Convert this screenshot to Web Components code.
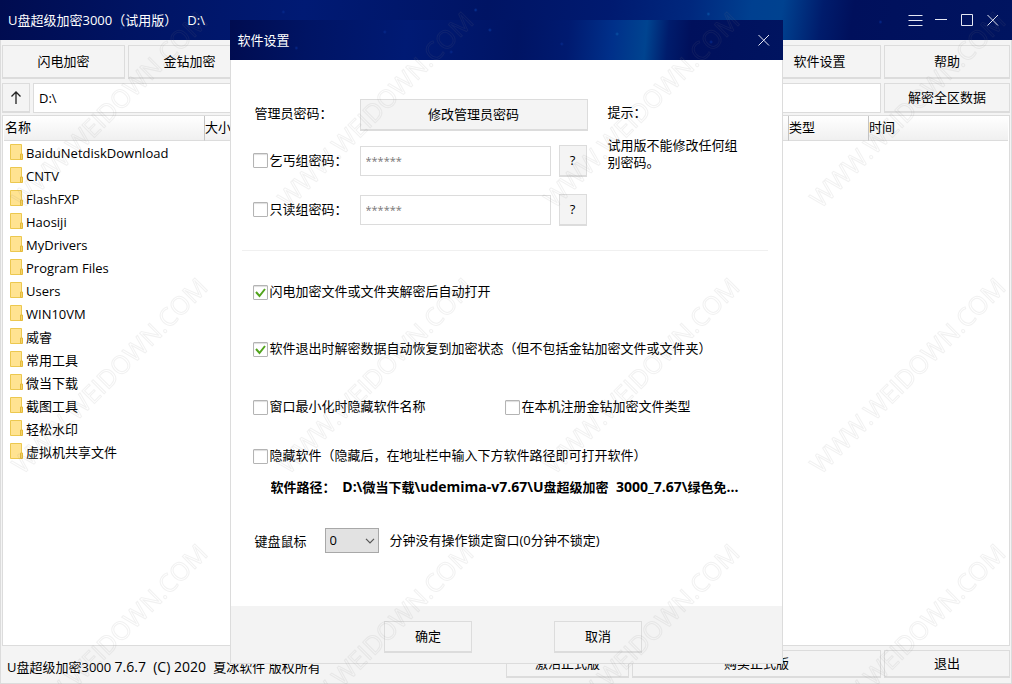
<!DOCTYPE html>
<html lang="zh-CN">
<head>
<meta charset="utf-8">
<meta name="viewport" content="width=device-width, initial-scale=1">
<title>U盘超级加密3000</title>
<style>
  :root {
    --line: #dcdcdc;
    --panel: #f4f4f4;
    --stars:
      radial-gradient(circle at 12% 70%, #06298c 0, transparent 2px),
      radial-gradient(circle at 28% 30%, #06298c 0, transparent 2px),
      radial-gradient(circle at 40% 80%, #06298c 0, transparent 2px),
      radial-gradient(circle at 47% 25%, #083496 0, transparent 2px),
      radial-gradient(circle at 60% 60%, #06298c 0, transparent 2px),
      radial-gradient(circle at 70% 35%, #0a52a4 0, transparent 2px),
      radial-gradient(circle at 87% 55%, #06298c 0, transparent 2px);
  }
  html, body { height: 100%; margin: 0; }
  body {
    font: 13px/17px "Open Sans", "Noto Sans CJK SC", sans-serif;
    color: #000;
    overflow: hidden;
  }
</style>
</head>
<body>
<app-window>
  <title-bar slot="title" heading="U盘超级加密3000（试用版）   D:\">
    <icon-button icon="menu" label="菜单"></icon-button>
    <icon-button icon="min" label="最小化"></icon-button>
    <icon-button icon="max" label="最大化"></icon-button>
    <icon-button icon="close" label="关闭"></icon-button>
  </title-bar>
  <tool-row slot="tools">
    <flat-button>闪电加密</flat-button>
    <flat-button>金钻加密</flat-button>
    <flat-button style="grid-column: 7">软件设置</flat-button>
    <flat-button>帮助</flat-button>
  </tool-row>
  <address-bar slot="address" path="D:\"></address-bar>
  <file-list slot="files"></file-list>
  <tool-row slot="status" class="status">
    <status-text style="grid-column: 1 / 5">U盘超级加密3000 <span style="font-size: 14px">7.6.7  (C) 2020  </span>夏冰软件 版权所有</status-text>
    <flat-button>激活正式版</flat-button>
    <flat-button style="grid-column: 6 / 8">购买正式版</flat-button>
    <flat-button>退出</flat-button>
  </tool-row>
  <settings-dialog slot="dialog"></settings-dialog>
</app-window>
<water-mark></water-mark>

<script>
const define = (name, html, setup) => {
  const template = document.createElement('template');
  template.innerHTML = html;
  customElements.define(name, class extends HTMLElement {
    connectedCallback() {
      if (this.shadowRoot) return;
      this.attachShadow({ mode: 'open' }).append(template.content.cloneNode(true));
      if (setup) setup(this, this.shadowRoot);
    }
  });
};

define('app-window', `
  <style>
    :host { display: block; height: 100vh; }
    .frame { display: flex; flex-direction: column; height: 100%; position: relative; }
    .body {
      flex: 1; min-height: 0; display: flex; flex-direction: column;
      box-sizing: border-box; padding: 5px 1px;
      background: var(--panel); border: 1px solid var(--line); border-top: 0;
    }
    slot[name=tools]::slotted(*) { height: 34px; margin-bottom: 4px; }
    slot[name=address]::slotted(*) { height: 30px; margin-bottom: 2px; }
    slot[name=files]::slotted(*) { flex: 1; min-height: 0; margin-bottom: 4px; }
    slot[name=status]::slotted(*) { height: 28px; }
    .overlay { position: absolute; inset: 0; display: grid; place-items: center; }
  </style>
  <div class="frame">
    <slot name="title"></slot>
    <main class="body">
      <slot name="tools"></slot><slot name="address"></slot>
      <slot name="files"></slot><slot name="status"></slot>
    </main>
    <div class="overlay"><slot name="dialog"></slot></div>
  </div>`);

define('title-bar', `
  <style>
    :host {
      display: flex; align-items: center; height: 40px; flex: none;
      box-sizing: border-box; padding: 0 6px 0 8px; color: #fff;
      background: var(--stars), linear-gradient(98deg, #000c50 0, #001464 14%, #001a74 30%,
        #001464 48%, #001a70 60%, #00287e 68%, #004090 74%, #004290 77%, #001c6c 81%, #00105c 84%, #001460 100%);
    }
    h1 { flex: 1; margin: 0; font: inherit; white-space: pre; }
  </style>
  <h1></h1><slot></slot>`,
  (host, root) => { root.querySelector('h1').textContent = host.getAttribute('heading'); });

const icons = {
  menu: '<path d="M6.5 8.5h14M6.5 13.5h14M6.5 18.5h14"/>',
  min: '<path d="M7 12.5h12"/>',
  max: '<path d="M7.5 7.5h11v11h-11z"/>',
  close: '<path d="M7.500 8l10.500 10.500M18 8l-10.500 10.500"/>'
};
define('icon-button', `
  <style>
    :host { display: block; width: 26px; height: 26px; }
    button { display: block; width: 26px; height: 26px; padding: 0; border: 0; background: none; }
    svg { display: block; fill: none; stroke: #e6e8f4; stroke-width: 1; }
  </style>
  <button type="button"></button>`,
  (host, root) => {
    const button = root.querySelector('button');
    button.setAttribute('aria-label', host.getAttribute('label'));
    button.innerHTML = '<svg width="26" height="26" viewBox="0 0 26 26">' + icons[host.getAttribute('icon')] + '</svg>';
  });

define('tool-row', `
  <style>
    :host {
      display: grid; gap: 3px; flex: none;
      grid-template-columns: repeat(7, minmax(0, 41fr)) minmax(0, 42fr);
    }
  </style>
  <slot></slot>`);

define('flat-button', `
  <style>
    :host { display: block; }
    button {
      display: block; width: 100%; height: 100%; padding: 0 0 var(--lift, 1px);
      font: inherit; color: inherit; background: var(--panel);
      border: 1px solid var(--line); border-bottom-width: 2px;
    }
  </style>
  <button type="button"><slot></slot></button>`);

define('status-text', `
  <style>
    :host { display: block; }
    p { margin: 0; padding: 8px 5px 0; white-space: pre; }
  </style>
  <p><slot></slot></p>`);

define('address-bar', `
  <style>
    :host {
      display: grid; gap: 3px; flex: none;
      grid-template-columns: 28px minmax(0, 1fr) 126px;
    }
    input {
      box-sizing: border-box; width: 100%; height: 100%; padding: 0 5px;
      border: 1px solid var(--line); font: inherit; background: #fff; outline: 0;
    }
    svg { display: block; margin: 0 auto; fill: none; stroke: #222; stroke-width: 1.3; }
  </style>
  <flat-button><svg role="img" aria-label="向上" width="12" height="14" viewBox="0 0 12 14"><path d="M6 14V2M1.500 6.500L6 2l4.500 4.500"/></svg></flat-button>
  <input type="text" aria-label="路径">
  <flat-button>解密全区数据</flat-button>`,
  (host, root) => { root.querySelector('input').value = host.getAttribute('path'); });

define('file-list', `
  <style>
    :host { display: block; background: #fff; border: 1px solid var(--line); box-sizing: border-box; overflow: hidden; padding: 0 1px; }
    table { width: 100%; table-layout: fixed; border-collapse: separate; border-spacing: 0; }
    th {
      height: 25px; padding: 0 0 1px; text-align: left; font-weight: normal;
      background: linear-gradient(#fff, #f0f0f0); border-bottom: 1px solid var(--line); border-left: 1px solid #c4c4c4;
      box-sizing: border-box;
    }
    th:first-child { border-left: 0; padding-left: 1px; }
    td { height: 22px; padding: 1px 0 0; }
    a { display: flex; align-items: center; gap: 3px; padding-left: 6px; color: inherit; text-decoration: none; white-space: nowrap; }
    svg { display: block; margin-bottom: 2px; }
  </style>
  <table>
    <colgroup><col style="width:200px"><col><col style="width:80px"><col style="width:140px"></colgroup>
    <thead><tr><th>名称</th><th>大小</th><th>类型</th><th>时间</th></tr></thead>
    <tbody></tbody>
  </table>`,
  (host, root) => {
    const names = ['BaiduNetdiskDownload', 'CNTV', 'FlashFXP', 'Haosiji', 'MyDrivers', 'Program Files', 'Users',
      'WIN10VM', '威睿', '常用工具', '微当下载', '截图工具', '轻松水印', '虚拟机共享文件'];
    root.querySelector('tbody').innerHTML = names.map(name => `<tr><td colspan="4"><a href="#"><svg width="13" height="16" viewBox="0 0 13 16"><path d="M.5.5h11v15H.5z" fill="#ffe391" stroke="#ecc84f"/><path d="M10.500 15.500v-5.500h2v5.500z" fill="#f6d466" stroke="#e3b93b"/></svg>${name}</a></td></tr>`).join('');
  });

define('check-box', `
  <style>
    :host { display: block; }
    label { display: flex; align-items: center; gap: 2px; white-space: nowrap; }
    input {
      appearance: none; flex: none; width: 15px; height: 15px; margin: 0; box-sizing: border-box;
      border: 1px solid #b4b4b4; border-radius: 1px; background: #fff; box-shadow: inset 0 1px 1px #ddd;
    }
    .box { display: grid; margin-top: 1px; }
    .box > * { grid-area: 1 / 1; }
    svg { display: none; fill: none; stroke: #52a41c; stroke-width: 2; }
    input:checked + svg { display: block; }
  </style>
  <label><span class="box"><input type="checkbox"><svg width="15" height="15" viewBox="0 0 15 15"><path d="M3 7l3.500 4L12 4"/></svg></span><slot></slot></label>`,
  (host, root) => { root.querySelector('input').checked = host.hasAttribute('checked'); });

define('settings-dialog', `
  <style>
    :host { display: flex; flex-direction: column; width: 553px; min-height: 644px; background: #fff; }
    header {
      display: flex; align-items: center; justify-content: space-between; height: 40px; box-sizing: border-box;
      padding: 0 6px 0 8px; color: #fff;
      background: var(--stars), linear-gradient(95deg, #000c50 0, #001464 14%, #001a74 32%,
        #001464 52%, #001a70 61%, #00308a 69%, #004490 75%, #001c6c 79%, #00105c 83%, #001460 100%);
    }
    h2 { margin: 0; font: inherit; }
    .content { flex: 1; display: flex; flex-direction: column; border: solid var(--line); border-width: 0 1px; padding: 39px 14px 0 11px; }
    .passwords {
      display: grid; grid-template-columns: 107px 191px 37px 1fr; grid-template-rows: 46px 49px 32px;
      padding: 0 0 0 11px; margin-bottom: 24px;
    }
    .row { display: grid; grid-column: 1 / 4; grid-template-columns: subgrid; align-items: center; height: 32px; }
    .row check-box { margin-bottom: 2px; }
    .label { padding: 0 0 4px 2px; }
    .wide { grid-column: 2 / 4; height: 32px; }
    .row input {
      box-sizing: border-box; width: 100%; height: 30px; padding: 0 5px 2px; margin: 0; outline: 0;
      border: 1px solid var(--line); background: #fff; font: inherit; font-size: 11px; color: #777;
    }
    .help { --lift: 0; height: 32px; margin-left: 8px; margin-right: 1px; }
    .tip { grid-column: 4; grid-row: 1 / 4; padding: 5px 26px 0 20px; }
    .tip p { margin: 0 0 16px; }
    hr { width: 100%; height: 1px; border: 0; margin: 0; background: #f0f0f0; }
    .options { display: flex; flex-direction: column; padding: 32px 0 0 11px; }
    .options > check-box { margin-bottom: 40px; }
    .pair { display: grid; grid-template-columns: 252px 1fr; margin: 1px 0 32px; }
    .options > check-box.hide { margin-bottom: 14px; }
    .path { margin: 0 8px 0 18px; font-weight: bold; white-space: pre; overflow: hidden; }
    .path span { font-size: 14px; }
    .lock { display: flex; align-items: center; margin: 32px 0 0 2px; }
    .lock label { width: 70px; padding-top: 2px; }
    .select { display: grid; width: 54px; margin-right: 11px; }
    .select > * { grid-area: 1 / 1; }
    select {
      appearance: none; width: 54px; height: 25px; padding: 0 4px; font: inherit; color: inherit;
      background: #e2e2e2; border: 1px solid #a8a8a8; border-radius: 0;
    }
    .select svg { place-self: center end; margin-right: 4px; fill: none; stroke: #555; stroke-width: 1.2; pointer-events: none; }
    footer {
      display: flex; justify-content: center; gap: 82px; box-sizing: border-box; height: 58px; padding: 15px 0 0 14px;
      background: #f3f3f3; border: 1px solid var(--line); border-top: 0;
    }
    footer flat-button { width: 88px; height: 32px; }
  </style>
  <header><h2>软件设置</h2><icon-button icon="close" label="关闭"></icon-button></header>
  <section class="content">
    <div class="passwords">
      <div class="row"><span class="label">管理员密码：</span><flat-button class="wide">修改管理员密码</flat-button></div>
      <div class="row"><check-box>乞丐组密码：</check-box><input type="text" value="******" aria-label="乞丐组密码"><flat-button class="help">?</flat-button></div>
      <div class="row"><check-box>只读组密码：</check-box><input type="text" value="******" aria-label="只读组密码"><flat-button class="help">?</flat-button></div>
      <div class="tip"><p>提示：</p><p>试用版不能修改任何组别密码。</p></div>
    </div>
    <hr>
    <div class="options">
      <check-box checked>闪电加密文件或文件夹解密后自动打开</check-box>
      <check-box checked>软件退出时解密数据自动恢复到加密状态（但不包括金钻加密文件或文件夹）</check-box>
      <div class="pair"><check-box>窗口最小化时隐藏软件名称</check-box><check-box>在本机注册金钻加密文件类型</check-box></div>
      <check-box class="hide">隐藏软件（隐藏后，在地址栏中输入下方软件路径即可打开软件）</check-box>
      <div class="path">软件路径：  <span>D:\\</span>微当下载<span>\\udemima-v7.67\\U</span>盘超级加密<span>  3000_7.67\\</span>绿色免<span>...</span></div>
      <div class="lock">
        <label for="minutes">键盘鼠标</label>
        <span class="select"><select id="minutes"><option>0</option></select><svg width="10" height="6" viewBox="0 0 10 6"><path d="M1 .8l4 4 4-4"/></svg></span>
        <span>分钟没有操作锁定窗口(0分钟不锁定)</span>
      </div>
    </div>
  </section>
  <footer><flat-button>确定</flat-button><flat-button>取消</flat-button></footer>`);

define('water-mark', `
  <style>
    :host { position: fixed; inset: 0; pointer-events: none; }
    svg { display: block; width: 100%; height: 100%; }
    text { font: 25px "Open Sans", sans-serif; text-anchor: middle; fill: none; stroke: rgba(128, 128, 128, .11); stroke-width: 1; }
  </style>
  <svg aria-hidden="true"></svg>`,
  (host, root) => {
    const pitch = 266;
    let marks = '';
    for (let row = 0; row * pitch < innerHeight; row++)
      for (let col = 0; col * pitch < innerWidth; col++)
        marks += `<text transform="translate(${116 + col * pitch} ${116 + row * pitch}) rotate(-45)">WWW.WEIDOWN.COM</text>`;
    root.querySelector('svg').innerHTML = marks;
  });
</script>
</body>
</html>
